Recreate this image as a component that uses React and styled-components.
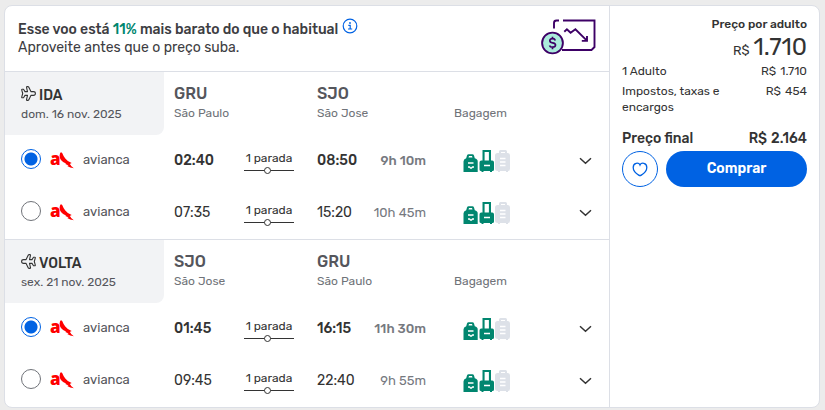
import React from 'react';
import styled, { createGlobalStyle, css } from 'styled-components';

const GlobalStyle = createGlobalStyle`
  *,
  *::before,
  *::after {
    box-sizing: border-box;
  }
  body {
    margin: 0;
    background: #ececec;
    color: #333;
    font-family: Rubik, Roboto, 'Liberation Sans', sans-serif;
    font-size: 13px;
    line-height: 16px;
  }
  h2,
  p {
    margin: 0;
  }
`;

const Page = styled.main`
  padding: 5px 5px 3px 4px;
`;
const Card = styled.article`
  display: grid;
  grid-template-columns: minmax(0, 1fr) 210px;
  border: 1px solid #dcdfe6;
  border-radius: 8px;
  background: #fff;
  overflow: hidden;
`;
const Banner = styled.header`
  display: flex;
  justify-content: space-between;
  align-items: flex-start;
  padding: 12px 13px 0;
  height: 65px;
`;
const BannerText = styled.div`
  font-size: 14px;
  line-height: 18px;
  color: #3d3d42;
`;
const Headline = styled.div`
  display: flex;
  gap: 4px;
`;
const HeadlineText = styled.strong`
  padding-top: 3px;
  font-weight: 500;
`;
const Highlight = styled.span`
  color: #00866f;
`;
const InfoButton = styled.button`
  display: flex;
  height: 16px;
  padding: 0;
  border: 0;
  background: none;
`;
const Leg = styled.section`
  border-top: 1px solid #dcdfe6;
`;
const Columns = styled.div`
  display: grid;
  grid-template-columns: 169fr 70fr 73fr 109fr 183fr;
`;
const LegHeader = styled(Columns)`
  height: 63px;
`;
const LegTag = styled.div`
  margin-right: 10px;
  padding: 14px 16px 0;
  border-bottom-right-radius: 8px;
  background: #f2f3f5;
  font-size: 12px;
  color: #55565c;
`;
const LegTitle = styled.h2`
  display: flex;
  gap: 3px;
  height: 20px;
  font-size: 14px;
  font-weight: 500;
  line-height: 20px;
  color: #333;
`;
const Airport = styled.div`
  grid-column: span ${({ $span }) => $span};
  padding-top: 12px;
  font-size: 12px;
  color: #707379;
`;
const Code = styled.p`
  font-size: 16px;
  font-weight: 500;
  line-height: 20px;
  margin-bottom: 1px;
  color: #55565c;
`;
const BaggageTitle = styled.p`
  padding: 33px 0 0 28px;
  font-size: 12px;
  color: #707379;
`;
const Option = styled(Columns)`
  align-items: center;
  height: 52px;
  font-size: 14px;
`;
const Airline = styled.label`
  display: flex;
  align-items: center;
  gap: 9px;
  padding: 0 0 4px 16px;
  font-size: 13px;
  color: #55565c;
`;
const AirlineName = styled.span`
  padding-top: 1px;
`;
const Radio = styled.input`
  appearance: none;
  width: 20px;
  height: 20px;
  margin: 0;
  border: 1px solid #707379;
  border-radius: 50%;

  &:checked {
    border-color: #0062e3;
    background: radial-gradient(circle, #0062e3 6px, #fff 7px);
  }
`;
const Time = styled.span`
  font-size: 14px;
  font-weight: ${({ $bold }) => ($bold ? 500 : 400)};
`;
const Duration = styled(Time)`
  font-size: 13px;
  color: #76797f;
`;
const Arrival = styled.div`
  display: flex;
  justify-content: space-between;
`;
const Stops = styled.button`
  width: 50px;
  padding: 4px 0 0;
  border: 0;
  background: none;
  color: #333;
  font: inherit;
  font-size: 12px;
  line-height: 14px;
  text-align: center;
  white-space: nowrap;
`;
const StopLine = styled.span`
  display: flex;
  align-items: center;
  justify-content: center;
  height: 9px;
  margin-top: 1px;
  background: linear-gradient(#333, #333) center / 100% 1px no-repeat;

  &::before {
    content: '';
    width: 7px;
    height: 7px;
    margin-right: 3px;
    border: 1px solid #333;
    border-radius: 50%;
    background: #fff;
  }
`;
const Extras = styled.div`
  display: flex;
  align-items: center;
  justify-content: space-between;
  padding: 0 16px 0 37px;
`;
const Toggle = styled.button`
  display: flex;
  padding: 0;
  border: 0;
  background: none;
`;
const Summary = styled.aside`
  padding: 10px 12px;
  border-left: 1px solid #dcdfe6;
`;
const PerAdult = styled.h2`
  font-size: 12px;
  font-weight: 500;
  line-height: 16px;
  text-align: right;
`;
const Price = styled.p`
  display: flex;
  align-items: baseline;
  justify-content: flex-end;
  gap: 4px;
  padding-top: 1px;
  margin-bottom: 2px;
  font-size: 24px;
  line-height: 28px;
`;
const Currency = styled.span`
  font-size: 13px;
  line-height: 16px;
`;
const Line = styled.div`
  display: flex;
  justify-content: space-between;
  margin-bottom: 4px;
  font-size: 12px;

  ${({ $total }) =>
    $total &&
    css`
      margin-top: 16px;
      font-size: 14px;
      font-weight: 500;
    `}
`;
const LineLabel = styled.span`
  max-width: 110px;
`;
const Amount = styled.span`
  display: flex;
  gap: 4px;
`;
const Actions = styled.div`
  display: flex;
  gap: 8px;
`;
const Favorite = styled.button`
  display: flex;
  align-items: center;
  justify-content: center;
  width: 36px;
  height: 36px;
  padding: 0;
  border: 1px solid #0062e3;
  border-radius: 50%;
  background: #fff;
`;
const Buy = styled.button`
  flex: 1;
  height: 36px;
  border: 0;
  border-radius: 18px;
  background: #0062e3;
  color: #fff;
  font: inherit;
  font-size: 14px;
  font-weight: 600;
`;

const InfoIcon = () => (
  <svg width="16" height="16" viewBox="0 0 16 16" fill="none" stroke="#0062e3">
    <circle cx="8" cy="8" r="6.8" strokeWidth="1.2" />
    <path d="M6.300 7.300h1.900v3.600M6 11h4.200" strokeWidth="1.2" />
    <circle cx="8" cy="5" r=".9" fill="#0062e3" stroke="none" />
  </svg>
);

const PriceDropIcon = () => (
  <svg width="55" height="38" viewBox="0 -.5 55 38" fill="none" stroke="#3d0066" strokeWidth="1.9">
    <path d="M13 10V4.500Q13 2 15.500 2H18M22 2h31.500v26.500l-3 3H21" />
    <path d="M23.300 13.200l2.600-2.400 3.700 3.500 4.800-3.500 11.500 11.400M46 17.400v5h-5.200" />
    <circle cx="11.5" cy="24.5" r="10.4" fill="#abebdc" />
    <path
      d="M14.300 21.900q-.5-1.800-2.800-1.800-2.700 0-2.700 2t2.700 2.200q3 .3 3 2.300t-3 2.100q-2.500 0-3-1.800M11.500 18.200v2M11.500 28.700v2"
      strokeWidth="1.7"
    />
  </svg>
);

const PlaneIcon = ({ back }) => (
  <svg width="15" height="15" viewBox="0 0 15 15" fill="none" stroke="#333" strokeWidth="1.1" strokeLinejoin="round">
    <path
      transform={back ? 'matrix(-1 0 0 1 15 0)' : undefined}
      d="M1.200 3.300h1.300L4 5.600h2.500L5.500 1.400Q5.400.6 6 .6h.9q.5 0 .8.500l2.200 4.500h2.500q2 0 2 1.900t-2 1.900H9.900l-2.200 4.500q-.3.500-.8.500H6q-.6 0-.5-.8L6.500 9.400H4l-1.500 2.300H1.200q-.6 0-.5-.6L1.700 7.500.7 3.900Q.6 3.300 1.200 3.300z"
    />
  </svg>
);

const AviancaLogo = () => (
  <svg width="24" height="26" viewBox="0 0 24 26" fill="#f00">
    <text x="0" y="19" fontFamily="Open Sans" fontSize="17" fontWeight="800">
      a
    </text>
    <path d="M10.800 6.300Q12.300 6.300 12.800 8.300q.7 2.200 2.500 4.200 2.200 3 6.400 4.600l-2 1 1.500 1.300-.6.100 3.200 2.700q-3.800-.2-6.600-2.200l1.400-.4-3.200-1.600.6-.4Q9.300 14.700 9.600 9.500q.2-2.200 1.200-3.200z" />
  </svg>
);

const BaggageIcon = () => (
  <svg width="48" height="23" viewBox="0 0 48 23">
    <g fill="#00866f" fillRule="evenodd">
      <path d="M.5 22V11.500Q.5 9 3.200 8.300L4 5.400Q4.400 4.200 5.600 4.200h3.800q1.200 0 1.600 1.200l.8 2.900q2.900.7 2.900 3.200V22zM5.500 7.500h4L9 6H6z" />
      <path d="M19.500 0h8.500v10.500h1.200q1.800 0 1.800 2v7q0 1.500-1.500 1.500H29v1h-2v-1h-6.500v1h-2v-1h-.5Q16.500 21 16.500 19.500v-7q0-2 1.800-2h1.200zM21.600 2.100v8.400h4.300V2.100z" />
    </g>
    <path
      d="M36 3V1.500Q36 0 37.500 0h5Q44 0 44 1.500V3h.5Q47 3 47 5.500v13Q47 21 45 21v1h-2v-1h-6v1h-2v-1q-3 0-3-2.500v-13Q32 3 34.500 3zM38 2v1h4V2z"
      fill="#dde1e8"
      fillRule="evenodd"
    />
    <path
      d="M5 13h5.500M5 17h1.500l1 1h1l1-1H11M21 15.500h6M37 8.500h5.500M37 12h5.500M37 15.500h5.500"
      fill="none"
      stroke="#fff"
      strokeWidth="1.3"
    />
  </svg>
);

const ChevronIcon = () => (
  <svg width="14" height="8" viewBox="0 0 14 8" fill="none" stroke="#333" strokeWidth="1.5">
    <path d="M1 1.200l5.500 5 5.500-5" />
  </svg>
);

const HeartIcon = () => (
  <svg width="16" height="16" viewBox="0 0 16 16" fill="none" stroke="#0062e3" strokeWidth="1.3">
    <path d="M8 4C6.800 1.200 1.200 1.400 1.200 6.500c0 3.700 3.400 6.300 5.500 7.600.9.600 1.700.6 2.600 0 2.100-1.300 5.500-3.900 5.500-7.600C14.800 1.400 9.200 1.200 8 4z" />
  </svg>
);

const legs = [
  {
    id: 'ida',
    title: 'IDA',
    date: 'dom. 16 nov. 2025',
    from: { code: 'GRU', city: 'São Paulo' },
    to: { code: 'SJO', city: 'São Jose' },
    options: [
      { departure: '02:40', arrival: '08:50', duration: '9h 10m' },
      { departure: '07:35', arrival: '15:20', duration: '10h 45m' },
    ],
  },
  {
    id: 'volta',
    title: 'VOLTA',
    date: 'sex. 21 nov. 2025',
    from: { code: 'SJO', city: 'São Jose' },
    to: { code: 'GRU', city: 'São Paulo' },
    options: [
      { departure: '01:45', arrival: '16:15', duration: '11h 30m' },
      { departure: '09:45', arrival: '22:40', duration: '9h 55m' },
    ],
  },
];

const FlightLeg = ({ id, title, date, from, to, options }) => (
  <Leg>
    <LegHeader>
      <LegTag>
        <LegTitle>
          <PlaneIcon back={id === 'volta'} />
          {title}
        </LegTitle>
        {date}
      </LegTag>
      <Airport $span={2}>
        <Code>{from.code}</Code>
        {from.city}
      </Airport>
      <Airport $span={1}>
        <Code>{to.code}</Code>
        {to.city}
      </Airport>
      <BaggageTitle>Bagagem</BaggageTitle>
    </LegHeader>
    {options.map(({ departure, arrival, duration }, index) => (
      <Option key={departure}>
        <Airline>
          <Radio type="radio" name={id} defaultChecked={index === 0} />
          <AviancaLogo />
          <AirlineName>avianca</AirlineName>
        </Airline>
        <Time $bold={index === 0}>{departure}</Time>
        <Stops type="button">
          1 parada
          <StopLine />
        </Stops>
        <Arrival>
          <Time $bold={index === 0}>{arrival}</Time>
          <Duration $bold={index === 0}>{duration}</Duration>
        </Arrival>
        <Extras>
          <BaggageIcon />
          <Toggle type="button" aria-label="Ver detalhes">
            <ChevronIcon />
          </Toggle>
        </Extras>
      </Option>
    ))}
  </Leg>
);

const App = () => (
  <>
    <GlobalStyle />
    <Page>
      <Card>
        <div>
          <Banner>
            <BannerText>
              <Headline>
                <HeadlineText>
                  Esse voo está <Highlight>11%</Highlight> mais barato do que o habitual
                </HeadlineText>
                <InfoButton type="button" aria-label="Mais informações">
                  <InfoIcon />
                </InfoButton>
              </Headline>
              <p>Aproveite antes que o preço suba.</p>
            </BannerText>
            <PriceDropIcon />
          </Banner>
          {legs.map((leg) => (
            <FlightLeg key={leg.id} {...leg} />
          ))}
        </div>
        <Summary>
          <PerAdult>Preço por adulto</PerAdult>
          <Price>
            <Currency>R$</Currency>
            <span>1.710</span>
          </Price>
          <Line>
            <LineLabel>1 Adulto</LineLabel>
            <Amount>
              <span>R$</span>
              <span>1.710</span>
            </Amount>
          </Line>
          <Line>
            <LineLabel>Impostos, taxas e encargos</LineLabel>
            <Amount>
              <span>R$</span>
              <span>454</span>
            </Amount>
          </Line>
          <Line $total>
            <span>Preço final</span>
            <Amount>
              <span>R$</span>
              <span>2.164</span>
            </Amount>
          </Line>
          <Actions>
            <Favorite type="button" aria-label="Salvar nos favoritos">
              <HeartIcon />
            </Favorite>
            <Buy type="button">Comprar</Buy>
          </Actions>
        </Summary>
      </Card>
    </Page>
  </>
);

export default App;
